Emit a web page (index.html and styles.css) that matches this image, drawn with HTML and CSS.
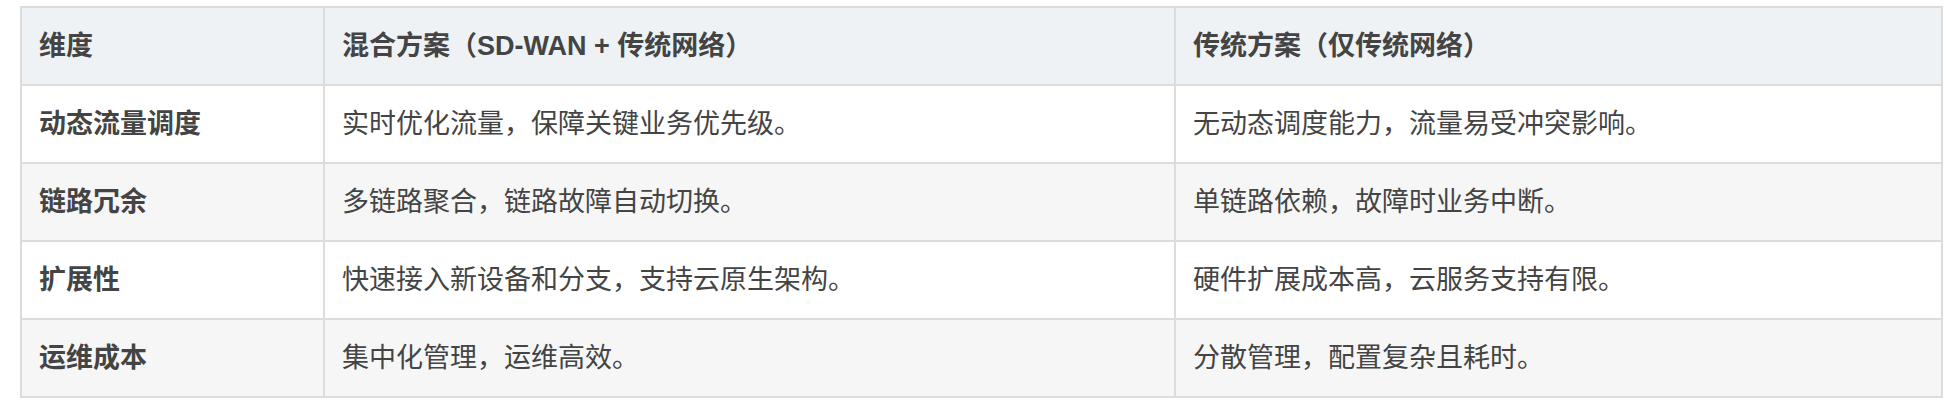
FILE: index.html
```html
<!DOCTYPE html>
<html lang="zh-CN">
<head>
<meta charset="utf-8">
<title>对比</title>
<link rel="stylesheet" href="styles.css">
</head>
<body>
<div class="wrap">
  <table class="cmp">
    <colgroup>
      <col class="c1">
      <col class="c2">
      <col class="c3">
    </colgroup>
    <thead>
      <tr>
        <th>维度</th>
        <th>混合方案（SD-WAN + 传统网络）</th>
        <th>传统方案（仅传统网络）</th>
      </tr>
    </thead>
    <tbody>
      <tr>
        <td class="dim">动态流量调度</td>
        <td>实时优化流量，保障关键业务优先级。</td>
        <td>无动态调度能力，流量易受冲突影响。</td>
      </tr>
      <tr>
        <td class="dim">链路冗余</td>
        <td>多链路聚合，链路故障自动切换。</td>
        <td>单链路依赖，故障时业务中断。</td>
      </tr>
      <tr>
        <td class="dim">扩展性</td>
        <td>快速接入新设备和分支，支持云原生架构。</td>
        <td>硬件扩展成本高，云服务支持有限。</td>
      </tr>
      <tr>
        <td class="dim">运维成本</td>
        <td>集中化管理，运维高效。</td>
        <td>分散管理，配置复杂且耗时。</td>
      </tr>
    </tbody>
  </table>
</div>
</body>
</html>
```

FILE: styles.css
```css
html, body {
  margin: 0;
  padding: 0;
  background: #ffffff;
}

.wrap {
  padding: 6px 0 0 20px;
}

.cmp {
  box-sizing: border-box;
  width: 1923px;
  table-layout: fixed;
  border-collapse: separate;
  border-spacing: 0;
  border-top: 2px solid #dcdcdc;
  border-left: 2px solid #dcdcdc;
  font-family: "Liberation Sans", "Noto Sans CJK SC", sans-serif;
  font-size: 27px;
  color: #444444;
}

.c1 { width: 303px; }
.c2 { width: 851px; }
.c3 { width: 767px; }

.cmp th,
.cmp td {
  box-sizing: border-box;
  padding: 18px 17px;
  line-height: 40px;
  text-align: left;
  vertical-align: middle;
  border-right: 2px solid #dcdcdc;
  border-bottom: 2px solid #dcdcdc;
  white-space: nowrap;
}

.cmp th {
  background: #eef2f5;
  font-weight: 700;
}

.cmp td {
  font-weight: 400;
  background: #ffffff;
}

.cmp tbody tr:nth-child(even) td {
  background: #f6f6f6;
}

.cmp td.dim {
  font-weight: 700;
}
```
